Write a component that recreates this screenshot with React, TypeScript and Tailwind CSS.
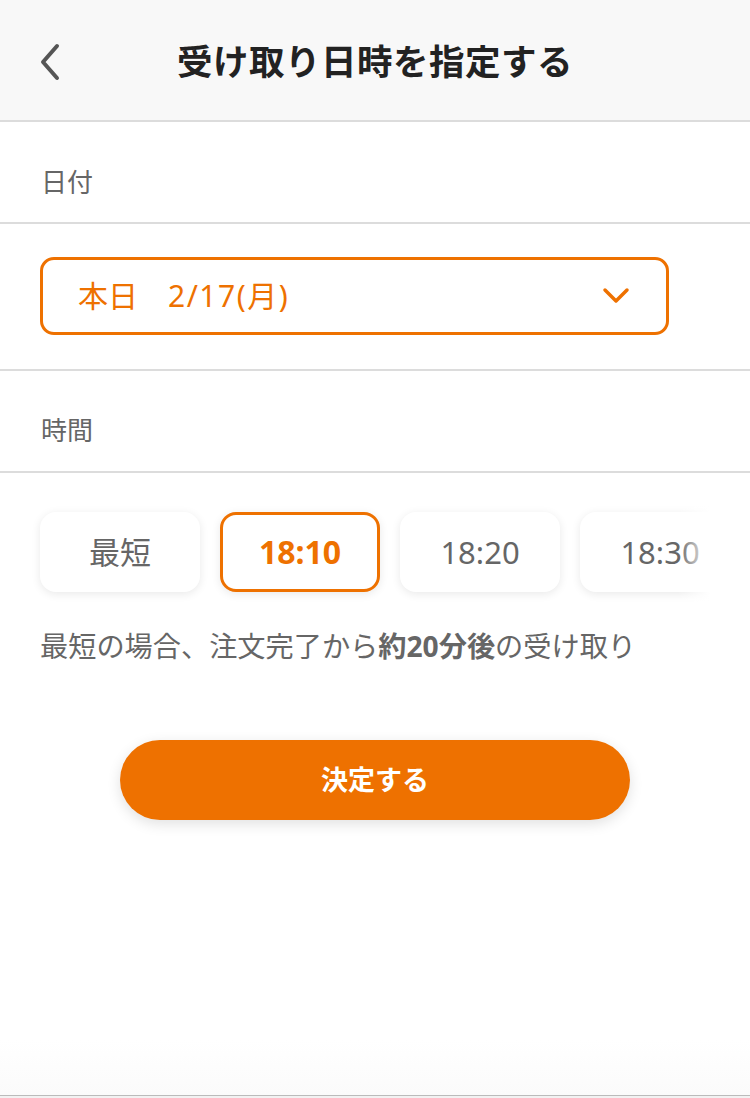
const font = { fontFamily: '"Noto Sans", "Noto Sans CJK JP", sans-serif' };

const slots = ["最短", "18:10", "18:20", "18:30"];

function BackIcon() {
  return (
    <svg width="24" height="38" viewBox="0 0 24 38" fill="none">
      <path d="M19 3 L5 19 L19 35" stroke="#555" strokeWidth="4" strokeLinecap="round" strokeLinejoin="round" />
    </svg>
  );
}

function ChevronDown() {
  return (
    <svg width="28" height="18" viewBox="0 0 28 18" fill="none">
      <path d="M3 3 L14 14 L25 3" stroke="#ee7100" strokeWidth="3.5" strokeLinecap="round" strokeLinejoin="round" />
    </svg>
  );
}

export default function App() {
  const selected = "18:10";

  return (
    <div className="h-[1098px] bg-white flex flex-col overflow-hidden" style={font}>
      {/* Header */}
      <header className="h-[122px] shrink-0 bg-[#f8f8f8] border-b-2 border-[#dcdcdc] flex items-center relative">
        <div className="absolute left-[38px] top-[43px]">
          <BackIcon />
        </div>
        <h1 className="w-full text-center text-[35.5px] font-bold text-[#222] leading-none pt-[3px] tracking-[0.5px]">
          受け取り日時を指定する
        </h1>
      </header>

      {/* Date label */}
      <div className="h-[102px] shrink-0 border-b-2 border-[#dcdcdc] px-[41px] pt-[40px]">
        <span className="text-[26px] leading-[40px] text-[#666]">日付</span>
      </div>

      {/* Date select */}
      <div className="shrink-0 border-b-2 border-[#dcdcdc] pt-[33px] pb-[34px] pl-[40px] pr-[81px]">
        <div className="h-[78px] border-[3px] border-[#ee7100] rounded-[14px] flex items-center justify-between pl-[35px] pr-[36px]">
          <span className="text-[30px] text-[#ee7100] leading-none">
            本日　<span className="tracking-[1.5px]">2/17(月)</span>
          </span>
          <ChevronDown />
        </div>
      </div>

      {/* Time label */}
      <div className="h-[102px] shrink-0 border-b-2 border-[#dcdcdc] px-[41px] pt-[39px]">
        <span className="text-[26px] leading-[40px] text-[#666]">時間</span>
      </div>

      {/* Time slots */}
      <div className="relative shrink-0 overflow-hidden pt-[39px] pb-[14px]">
        <div className="flex gap-[20px] pl-[40px] pb-[6px]">
          {slots.map((s) => {
            const active = s === selected;
            return (
              <div
                key={s}
                className={`w-[160px] h-[80px] shrink-0 rounded-[16px] bg-white flex items-center justify-center text-[31px] shadow-[0_2px_10px_rgba(0,0,0,0.09)] ${
                  active ? "border-[3px] border-[#ee7100] text-[#ee7100] font-bold text-[32px]" : "text-[#666]"
                }`}
              >
                {s}
              </div>
            );
          })}
        </div>
        <div className="absolute right-0 top-0 bottom-0 w-[72px] bg-gradient-to-r from-white/0 via-white via-45% to-white" />
      </div>

      <p className="px-[40px] text-[28.2px] leading-[40px] text-[#666] mt-[14px] whitespace-nowrap">
        最短の場合、注文完了から<span className="font-bold">約20分後</span>の受け取り
      </p>

      <div className="relative z-10 flex justify-center mt-[74px]">
        <button className="w-[510px] h-[80px] rounded-full bg-[#ee7100] text-white text-[27px] font-bold shadow-[0_4px_14px_rgba(0,0,0,0.12)]">
          決定する
        </button>
      </div>

      <div className="flex-1 bg-gradient-to-b from-white from-80% to-[#fbfbfb]" />
      <div className="h-[3px] shrink-0 border-t-[1.5px] border-[#bbb] bg-[#f2f2f2]" />
    </div>
  );
}
